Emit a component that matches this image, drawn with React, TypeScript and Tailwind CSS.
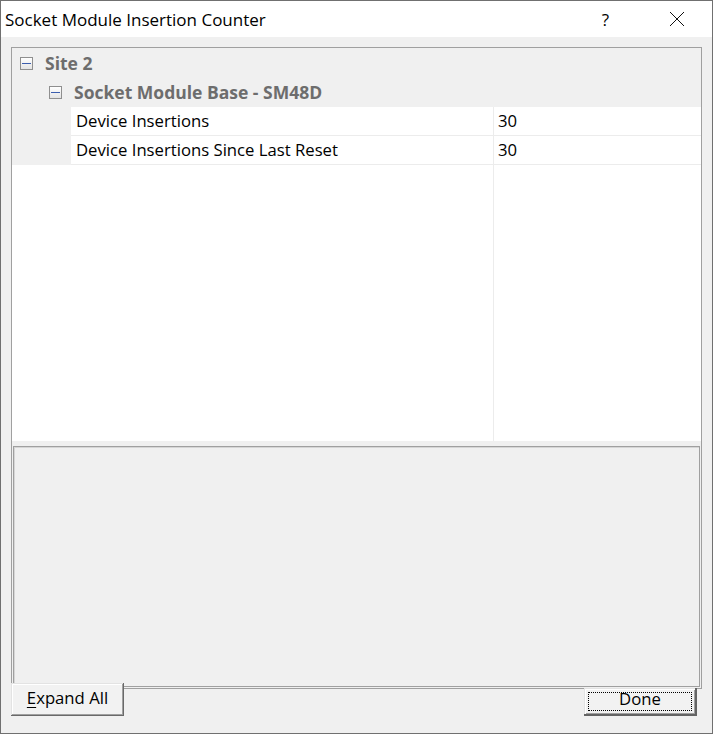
import React from "react";

function MinusBox() {
  return (
    <div className="w-[13px] h-[13px] border border-[#8f8f8f] bg-gradient-to-b from-[#ffffff] to-[#e4e4e4] flex items-center justify-center shrink-0">
      <div className="w-[9px] h-[1px] bg-[#3c5eae]" />
    </div>
  );
}

function CategoryRow({ label, indent, h }: { label: string; indent: number; h: string }) {
  return (
    <div className={`${h} bg-[#f0f0f0] flex items-center`}>
      <div className={indent === 0 ? "w-[8px] shrink-0" : "w-[37px] shrink-0"} />
      <MinusBox />
      <span className="ml-[12px] font-bold text-[#6d6d6d] text-[17.5px]">{label}</span>
    </div>
  );
}

function PropRow({ name, value }: { name: string; value: string }) {
  return (
    <div className="h-[29px] flex">
      <div className="w-[59px] shrink-0 bg-[#f0f0f0]" />
      <div className="w-[423px] shrink-0 bg-white border-r border-b border-[#ececec] flex items-center pl-[5px] text-black">
        {name}
      </div>
      <div className="flex-1 bg-white border-b border-[#ececec] flex items-center pl-[4px] text-black">
        {value}
      </div>
    </div>
  );
}

export default function App() {
  return (
    <div className="w-[713px] h-[734px] border border-[#707070] bg-[#f0f0f0] flex flex-col overflow-hidden font-['Open_Sans',sans-serif] text-[16.7px] leading-none">
      <div className="h-[36px] shrink-0 bg-white flex items-center">
        <span className="pl-[4px] text-[17px] text-black">Socket Module Insertion Counter</span>
        <span className="ml-auto mr-[60px] text-[17px] text-black">?</span>
        <svg width="16" height="16" viewBox="0 0 16 16" className="mr-[27px]">
          <path d="M1 1 L15 15 M15 1 L1 15" stroke="#111" strokeWidth="1" fill="none" />
        </svg>
      </div>
      <div className="flex-1 flex flex-col px-[10px] pt-[10px]">
        <div className="h-[642px] shrink-0 border border-[#a0a0a0] flex flex-col">
          <div className="h-[393px] shrink-0 bg-white flex flex-col">
            <CategoryRow label="Site 2" indent={0} h="h-[30px] pt-[1px]" />
            <CategoryRow label="Socket Module Base - SM48D" indent={1} h="h-[29px]" />
            <PropRow name="Device Insertions" value="30" />
            <PropRow name="Device Insertions Since Last Reset" value="30" />
            <div className="flex-1 flex">
              <div className="w-[482px] shrink-0 border-r border-[#ececec]" />
              <div className="flex-1" />
            </div>
          </div>
          <div className="h-[5px] shrink-0 bg-[#f0f0f0]" />
          <div className="h-[241px] shrink-0 mx-[1px] border border-[#a0a0a0] shadow-[inset_1px_1px_#d6d6d6] bg-[#f0f0f0]" />
        </div>
        <div className="flex justify-between items-start -mt-[6px]">
          <button className="relative z-10 w-[113px] h-[33px] pb-[2px] bg-[#f2f2f2] shadow-[inset_-1px_-1px_#696969,inset_1px_1px_#e3e3e3,inset_-2px_-2px_#a0a0a0,inset_2px_2px_#ffffff] flex items-center justify-center text-black">
            <span>
              <span className="underline underline-offset-[3px]">E</span>xpand All
            </span>
          </button>
          <button className="mt-[5px] mr-[5px] w-[113px] h-[28px] bg-[#f2f2f2] shadow-[inset_-1px_-1px_#646464,inset_-2px_-2px_#646464,inset_1px_1px_#e3e3e3,inset_2px_2px_#ffffff,inset_-3px_-3px_#a0a0a0] flex p-[4px] pb-[5px] pr-[5px]">
            <div className="flex-1 border border-dotted border-black flex items-center justify-center pb-[4px] text-black">
              Done
            </div>
          </button>
        </div>
      </div>
    </div>
  );
}
